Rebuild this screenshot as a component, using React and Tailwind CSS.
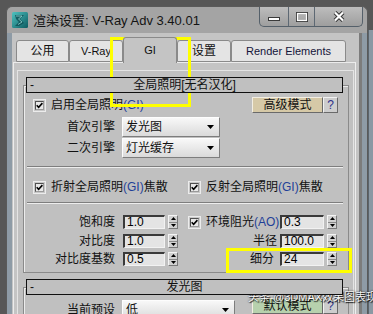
import React from "react";

function Check() {
  return (
    <div className="w-[13px] h-[13px] shrink-0 border border-[#ececec] bg-[#c8c8c8] p-[1px]">
      <div className="w-full h-full border border-t-[#505050] border-l-[#505050] border-r-[#9a9a9a] border-b-[#9a9a9a] bg-[#e9e9e9] flex items-center justify-center">
        <svg width="8" height="7" viewBox="0 0 8 7">
          <path d="M0.8 3.2 L3 5.6 L7.3 0.8" stroke="#000" strokeWidth="1.8" fill="none" />
        </svg>
      </div>
    </div>
  );
}

function Spinner() {
  return (
    <div className="w-[10px] h-[14px] shrink-0 flex flex-col border border-t-[#f4f4f4] border-l-[#f4f4f4] border-r-[#7a7a7a] border-b-[#7a7a7a] bg-[#d2d2d2]">
      <div className="flex-1 flex items-center justify-center border-b border-[#8a8a8a]">
        <svg width="5" height="3" viewBox="0 0 5 3"><path d="M0 3 L2.5 0 L5 3Z" fill="#000" /></svg>
      </div>
      <div className="flex-1 flex items-center justify-center">
        <svg width="5" height="3" viewBox="0 0 5 3"><path d="M0 0 L2.5 3 L5 0Z" fill="#000" /></svg>
      </div>
    </div>
  );
}

function Field({ v, cls }) {
  return (
    <div className={"h-[14px] shrink-0 bg-[#e4e4e4] border-t-2 border-l-2 border-r border-b border-t-[#3a3a3a] border-l-[#3a3a3a] border-r-[#f2f2f2] border-b-[#f2f2f2] pl-[2px] text-[12px] leading-[11px] text-black " + cls}>
      {v}
    </div>
  );
}

function Drop({ v, cls }) {
  return (
    <div className={"h-[20px] shrink-0 flex items-center justify-between bg-gradient-to-b from-[#f8f8f8] to-[#dadada] border border-t-[#fdfdfd] border-l-[#fdfdfd] border-r-[#7d7d7d] border-b-[#7d7d7d] pl-[3px] pr-[5px] text-[12px] " + cls}>
      <span>{v}</span>
      <svg width="7" height="4" viewBox="0 0 7 4"><path d="M0 0 H7 L3.5 4Z" fill="#000" /></svg>
    </div>
  );
}

function Btn({ label, cls }) {
  return (
    <div className={"w-[71px] h-[16px] shrink-0 border border-t-[#f3eee2] border-l-[#f3eee2] border-r-[#6a6a6a] border-b-[#6a6a6a] flex items-center justify-center text-[12px] text-[#111] " + cls}>
      {label}
    </div>
  );
}

function Help() {
  return (
    <div className="w-[15px] h-[16px] shrink-0 bg-[#cdcdcd] border border-t-[#f2f2f2] border-l-[#f2f2f2] border-r-[#6a6a6a] border-b-[#6a6a6a] flex items-center justify-center text-[12px] text-[#2c2f8a]">
      ?
    </div>
  );
}

function Sep() {
  return <div className="mt-[8px] ml-[3px] w-[316px] h-[2px] border-t border-t-[#7e7e7e] border-b border-b-[#ededed]" />;
}

function Header({ title }) {
  return (
    <div className="ml-[3px] w-[317px] h-[16px] relative z-10 bg-[#c0c0c0] border border-[#101010] flex items-center text-[12px] text-[#111]">
      <span className="w-[10px] pl-[3px] leading-none">-</span>
      <span className="flex-1 text-center pr-[10px] leading-none">{title}</span>
    </div>
  );
}

function Tab({ label, cls, sel }) {
  return (
    <div
      className={
        "shrink-0 flex items-center justify-center rounded-t-[3px] border border-[#8a8a8a] " +
        (sel ? "h-[26px] -mb-px border-b-0 bg-[#c4c4c4] z-10 " : "h-[22px] bg-[#e4e4e4] ") +
        cls
      }
    >
      {label}
    </div>
  );
}

export default function App() {
  return (
    <div className="w-[373px] h-[314px] overflow-hidden bg-[#575757] relative font-['Liberation_Sans','Noto_Sans_CJK_SC',sans-serif] text-[#111]">
      <div className="flex flex-col h-full">
        <div className="h-[6px] shrink-0" />
        <div className="flex flex-1">
          <div className="w-[6px] shrink-0" />
          {/* window */}
          <div className="w-[362px] shrink-0 flex flex-col rounded-t-[6px] border-l border-t border-r border-[#5a5a5a] bg-[#a4a4a4]">
            {/* title bar */}
            <div className="h-[26px] shrink-0 flex items-center pl-[5px]">
              <svg width="16" height="16" viewBox="0 0 16 16" className="shrink-0">
                <defs>
                  <linearGradient id="ic" x1="0" y1="0" x2="1" y2="1">
                    <stop offset="0" stopColor="#4fc3c0" />
                    <stop offset="1" stopColor="#0c5a60" />
                  </linearGradient>
                </defs>
                <rect x="0" y="0" width="16" height="16" rx="1.5" fill="url(#ic)" />
                <path d="M3 3 H12 L8 7 L12 11 L7 14 H3 L7 10 L4 7Z" fill="#0e4d54" opacity="0.8" />
                <path d="M4 4 H10 L6.5 7 L10 10 L6 12.5" stroke="#9fe6e0" strokeWidth="1" fill="none" opacity="0.7" />
              </svg>
              <span className="ml-[5px] text-[13px] text-[#141414] leading-none whitespace-nowrap">渲染设置: V-Ray Adv 3.40.01</span>
              <div className="ml-auto mr-[4px] self-start flex h-[20px] border border-t-0 border-[#55606a] rounded-b-[5px] overflow-hidden bg-gradient-to-b from-[#bdbdbd] to-[#9e9e9e]">
                <div className="w-[29px] flex items-center justify-center border-r border-[#5d6873]">
                  <div className="w-[12px] h-[4px] mt-[5px] bg-white border border-[#3a3a3a]" />
                </div>
                <div className="w-[26px] flex items-center justify-center border-r border-[#5d6873]">
                  <svg width="12" height="10" viewBox="0 0 12 10">
                    <rect x="1" y="1" width="10" height="8" fill="none" stroke="#3a3a3a" strokeWidth="2" />
                    <rect x="1.5" y="1.5" width="9" height="7" fill="none" stroke="#fff" strokeWidth="1.2" />
                  </svg>
                </div>
                <div className="w-[47px] flex items-center justify-center">
                  <svg width="12" height="11" viewBox="0 0 12 11">
                    <path d="M2 1.5 L10 9.5 M10 1.5 L2 9.5" stroke="#333" strokeWidth="4" />
                    <path d="M2 1.5 L10 9.5 M10 1.5 L2 9.5" stroke="#fff" strokeWidth="2.2" />
                  </svg>
                </div>
              </div>
            </div>
            {/* body */}
            <div className="flex flex-1">
              <div className="w-[5px] shrink-0 bg-[#8e9ba6]" />
              {/* client */}
              <div className="w-[347px] shrink-0 bg-[#c4c4c4] flex flex-col">
                <div className="h-[4px] shrink-0" />
                <div className="flex items-end h-[25px] pl-[4px] shrink-0 text-[12px]">
                  <Tab label="公用" cls="w-[53px]" />
                  <Tab label="V-Ray" cls="w-[54px] text-[11px]" />
                  <Tab label="GI" cls="w-[54px] text-[11px]" sel />
                  <Tab label="设置" cls="w-[54px]" />
                  <Tab label="Render Elements" cls="w-[115px] text-[11px] text-[#14143a]" />
                </div>
                {/* tab panel */}
                <div className="ml-[1px] w-[343px] flex-1 border-l border-t border-r border-l-[#ececec] border-t-[#ececec] border-r-[#eeeeee] pl-[3px] pt-[7px]">
                  <div className="w-[337px] h-full border-l border-t border-r border-[#e4e4e4] pl-[5px] pt-[6px] bg-[#c0c0c0]">
                    {/* rollout 1 */}
                    <div className="w-[326px]">
                      <Header title="全局照明[无名汉化]" />
                      <div className="-mt-[8px] h-[188px] border border-[#8a8a8a] shadow-[inset_1px_1px_0_#ececec] pt-[11px] flex flex-col">
                        <div className="flex items-center h-[16px] shrink-0">
                          <div className="ml-[9px]"><Check /></div>
                          <span className="ml-[5px] text-[12px] leading-none">启用全局照明<span className="text-[#1f3f98]">(GI)</span></span>
                          <div className="ml-auto mr-[10px] flex">
                            <Btn label="高级模式" cls="bg-[#d6c9a7]" />
                            <Help />
                          </div>
                        </div>
                        <div className="flex items-center h-[20px] mt-[4px] shrink-0">
                          <span className="w-[91px] text-right text-[12px] leading-none">首次引擎</span>
                          <Drop v="发光图" cls="ml-[7px] w-[98px]" />
                        </div>
                        <div className="flex items-center h-[20px] mt-[1px] shrink-0">
                          <span className="w-[91px] text-right text-[12px] leading-none">二次引擎</span>
                          <Drop v="灯光缓存" cls="ml-[7px] w-[98px]" />
                        </div>
                        <Sep />
                        <div className="flex items-center h-[14px] mt-[12px] shrink-0 text-[12px]">
                          <div className="w-[164px] flex items-center">
                            <div className="ml-[9px]"><Check /></div>
                            <span className="ml-[5px] leading-none whitespace-nowrap">折射全局照明<span className="text-[#1f3f98]">(GI)</span>焦散</span>
                          </div>
                          <Check />
                          <span className="ml-[5px] leading-none whitespace-nowrap">反射全局照明<span className="text-[#1f3f98]">(GI)</span>焦散</span>
                        </div>
                        <Sep />
                        <div className="flex items-center h-[14px] mt-[11px] shrink-0 text-[12px]">
                          <span className="w-[91px] text-right leading-none">饱和度</span>
                          <Field v="1.0" cls="ml-[8px] w-[42px]" />
                          <div className="ml-[3px]"><Spinner /></div>
                          <div className="ml-[10px] w-[92px] flex items-center">
                            <Check />
                            <span className="ml-[5px] leading-none whitespace-nowrap">环境阻光<span className="text-[#1f3f98]">(AO)</span></span>
                          </div>
                          <Field v="0.3" cls="w-[44px]" />
                          <div className="ml-[3px]"><Spinner /></div>
                        </div>
                        <div className="flex items-center h-[14px] mt-[5px] shrink-0 text-[12px]">
                          <span className="w-[91px] text-right leading-none">对比度</span>
                          <Field v="1.0" cls="ml-[8px] w-[42px]" />
                          <div className="ml-[3px]"><Spinner /></div>
                          <span className="ml-[10px] w-[92px] pr-[3px] text-right leading-none">半径</span>
                          <Field v="100.0" cls="w-[44px]" />
                          <div className="ml-[3px]"><Spinner /></div>
                        </div>
                        <div className="flex items-center h-[14px] mt-[4px] shrink-0 text-[12px]">
                          <span className="w-[91px] text-right leading-none">对比度基数</span>
                          <Field v="0.5" cls="ml-[8px] w-[42px]" />
                          <div className="ml-[3px]"><Spinner /></div>
                          <span className="ml-[10px] w-[92px] pr-[6px] text-right leading-none">细分</span>
                          <Field v="24" cls="w-[44px]" />
                          <div className="ml-[3px]"><Spinner /></div>
                        </div>
                      </div>
                    </div>
                    {/* rollout 2 */}
                    <div className="w-[326px] mt-[6px]">
                      <Header title="发光图" />
                      <div className="-mt-[8px] h-[60px] border border-[#8a8a8a] shadow-[inset_1px_1px_0_#ececec] pt-[10px]">
                        <div className="flex items-start h-[20px] text-[12px]">
                          <span className="w-[91px] mt-[6px] text-right leading-none">当前预设</span>
                          <Drop v="低" cls="ml-[7px] mt-[2px] w-[113px]" />
                          <div className="ml-auto mr-[10px] flex">
                            <Btn label="默认模式" cls="bg-[#b7d1ad]" />
                            <Help />
                          </div>
                        </div>
                      </div>
                    </div>
                  </div>
                </div>
              </div>
              <div className="w-[3px] shrink-0 bg-[#7c7c7c]" />
              <div className="w-[5px] shrink-0 bg-[#8e9ba6]" />
            </div>
          </div>
          <div className="flex-1 flex flex-col">
            <div className="h-[24px] bg-[#575757]" />
            <div className="flex-1 bg-[#8b98a3] border-l border-[#5a646d]" />
          </div>
        </div>
      </div>

      {/* watermark */}
      <div className="absolute left-[248px] top-[292px] text-[11px] leading-none text-white whitespace-nowrap [text-shadow:0_0_2px_#000,1px_1px_1px_#000] opacity-90">
        头条 @3DMAX效果图表现
      </div>

      {/* highlight boxes */}
      <div className="absolute left-[110px] top-[37px] w-[81px] h-[70px] border-[3px] border-[#ffff00]" />
      <div className="absolute left-[226px] top-[248px] w-[126px] h-[25px] border-[3px] border-[#ffff00]" />
    </div>
  );
}
